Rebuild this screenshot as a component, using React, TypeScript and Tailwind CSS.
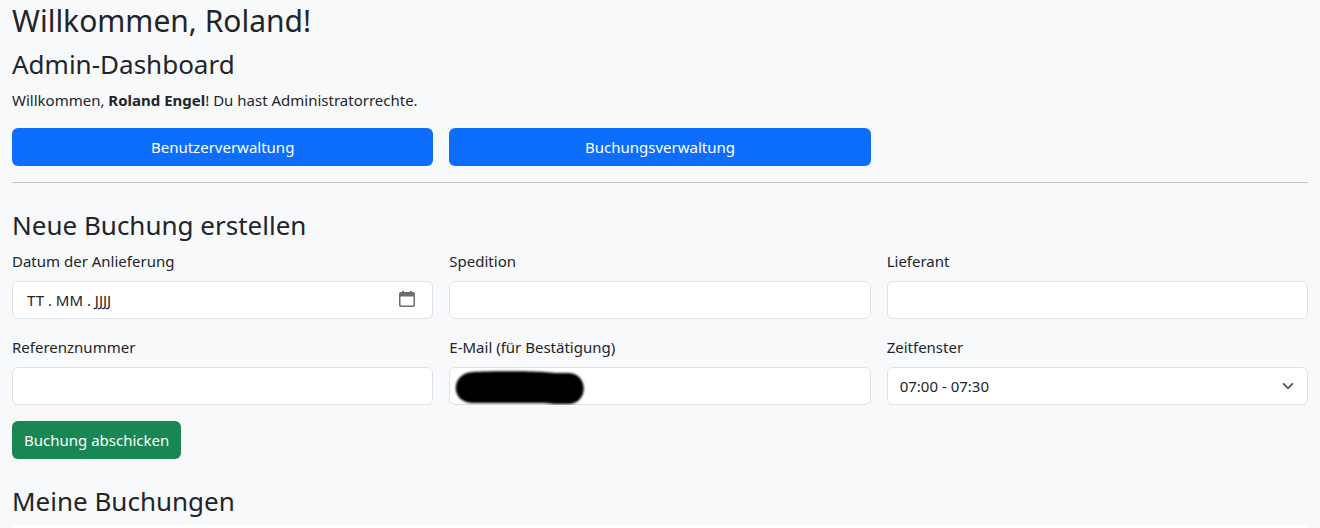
import React from 'react';

interface FieldProps {
  id: string;
  label: string;
  children: React.ReactNode;
}

const controlClass =
  'block w-full h-[38px] rounded-md border border-[#dee2e6] bg-white px-3 text-[15px] leading-6 text-[#212529] outline-none focus:border-[#86b7fe]';

const slots = ['07:00 - 07:30', '07:30 - 08:00', '08:00 - 08:30', '08:30 - 09:00'];

const Field: React.FC<FieldProps> = ({ id, label, children }) => (
  <div>
    <label htmlFor={id} className="block mb-2">
      {label}
    </label>
    <div className="relative">{children}</div>
  </div>
);

const SectionTitle: React.FC<{ children: React.ReactNode }> = ({ children }) => (
  <h3 className="mb-1.5 text-[26px] leading-9">{children}</h3>
);

const CalendarIcon = () => (
  <svg width="16" height="16" viewBox="0 0 16 16" className="block" aria-hidden="true">
    <path
      fill="#6b6d70"
      fillRule="evenodd"
      d="M3 0h2v1h6V0h2v1h1a2 2 0 0 1 2 2v11a2 2 0 0 1-2 2H2a2 2 0 0 1-2-2V3a2 2 0 0 1 2-2h1zM1.500 5.500v8a1 1 0 0 0 1 1h11a1 1 0 0 0 1-1v-8z"
    />
  </svg>
);

const ChevronIcon = () => (
  <svg
    width="16"
    height="12"
    viewBox="0 0 16 16"
    fill="none"
    stroke="#343a40"
    strokeWidth="2"
    strokeLinecap="round"
    strokeLinejoin="round"
    className="absolute right-3 top-[13px] pointer-events-none"
    aria-hidden="true"
  >
    <path d="m2 5 6 6 6-6" />
  </svg>
);

const Redaction = () => (
  <svg
    width="136"
    height="38"
    viewBox="0 0 136 38"
    className="absolute left-1 top-0 pointer-events-none"
    aria-hidden="true"
  >
    <path
      className="blur-[1px]"
      d="M20 5C36 4 75 4 91 5C98 6 106 6 115 6C136 6 136 37 115 37C105 37 98 37 91 36H20C-3 36-3 6 20 5Z"
    />
  </svg>
);

const App: React.FC = () => {
  return (
    <div className="min-h-screen bg-[#f8f9fb] px-3 font-['Noto_Sans','Open_Sans',sans-serif] text-[15px] leading-6 text-[#212529]">
      <h2 className="mb-1 text-[30px] leading-[42px]">Willkommen, Roland!</h2>

      <SectionTitle>Admin-Dashboard</SectionTitle>
      <p className="mb-4">
        Willkommen, <strong className="font-bold">Roland Engel</strong>! Du hast Administratorrechte.
      </p>
      <div className="grid grid-cols-3 gap-4">
        <button type="button" className="h-[38px] rounded-md bg-[#0d6efd] px-3 text-white hover:bg-[#0b5ed7]">
          Benutzerverwaltung
        </button>
        <button type="button" className="h-[38px] rounded-md bg-[#0d6efd] px-3 text-white hover:bg-[#0b5ed7]">
          Buchungsverwaltung
        </button>
      </div>

      <hr className="mt-4 mb-6 border-[#c2c4c6]" />

      <SectionTitle>Neue Buchung erstellen</SectionTitle>
      <form onSubmit={(e) => e.preventDefault()}>
        <div className="grid grid-cols-3 gap-4">
          <Field id="datum" label="Datum der Anlieferung">
            <input
              id="datum"
              type="text"
              placeholder="TT . MM . JJJJ"
              className={`${controlClass} pl-[14px] placeholder:text-[#212529]`}
            />
            <button type="button" aria-label="Kalender öffnen" className="absolute right-[18px] top-[10px]">
              <CalendarIcon />
            </button>
          </Field>
          <Field id="spedition" label="Spedition">
            <input id="spedition" type="text" className={controlClass} />
          </Field>
          <Field id="lieferant" label="Lieferant">
            <input id="lieferant" type="text" className={controlClass} />
          </Field>
          <Field id="referenz" label="Referenznummer">
            <input id="referenz" type="text" className={controlClass} />
          </Field>
          <Field id="email" label="E-Mail (für Bestätigung)">
            <input id="email" type="email" className={controlClass} />
            <Redaction />
          </Field>
          <Field id="zeitfenster" label="Zeitfenster">
            <select id="zeitfenster" className={`${controlClass} appearance-none`}>
              {slots.map((slot) => (
                <option key={slot}>{slot}</option>
              ))}
            </select>
            <ChevronIcon />
          </Field>
        </div>
        <button type="submit" className="mt-4 mb-6 h-[38px] rounded-md bg-[#198754] px-3 text-white hover:bg-[#157347]">
          Buchung abschicken
        </button>
      </form>

      <SectionTitle>Meine Buchungen</SectionTitle>
      <div className="h-1 bg-white" />
    </div>
  );
};

export default App;
